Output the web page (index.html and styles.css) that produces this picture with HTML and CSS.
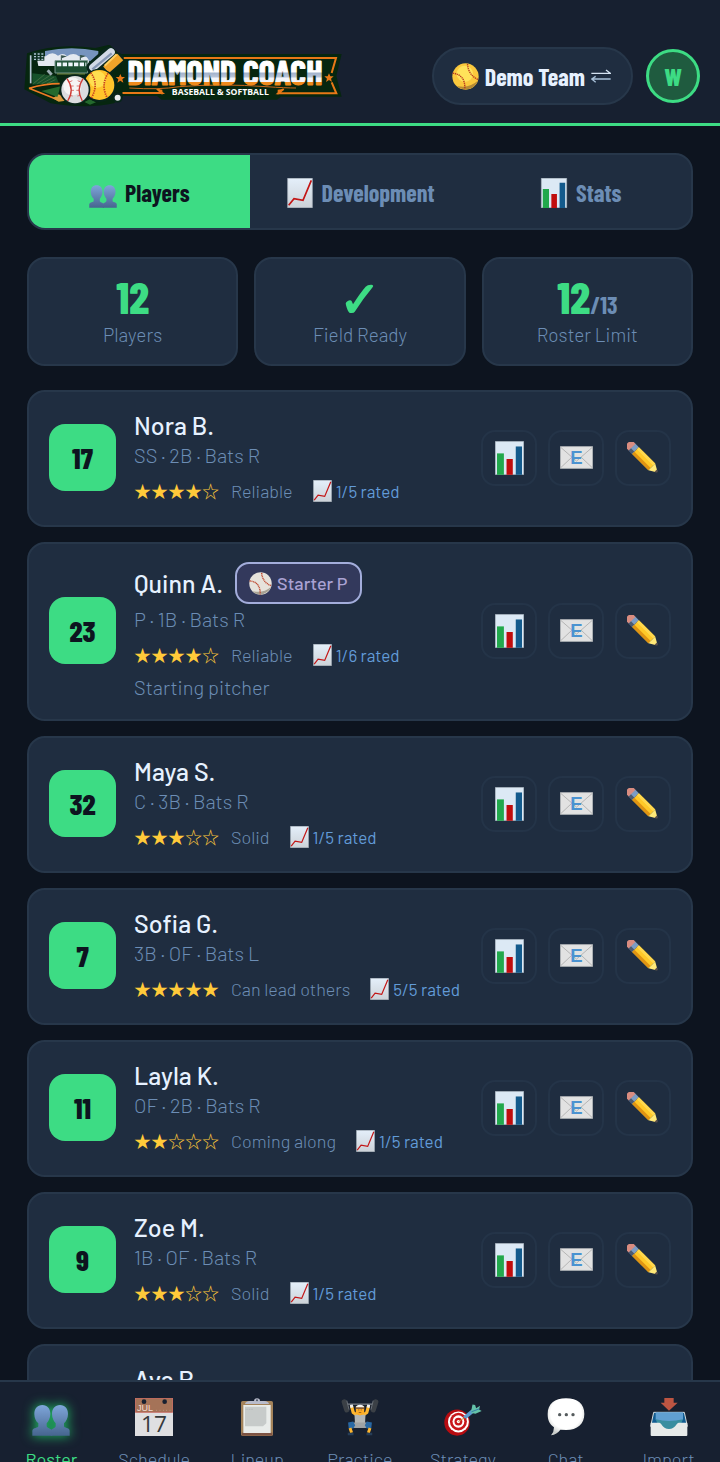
FILE: index.html
```html
<!DOCTYPE html>
<html lang="en">
<head>
    <meta charset="UTF-8">
    <meta name="viewport" content="width=device-width,initial-scale=1">
    <title>Diamond Coach - Roster</title>
    <link rel="stylesheet" href="styles.css">
</head>
<body>
<!-- shared icons -->
<svg class="sprite" aria-hidden="true">
    <defs>
        <linearGradient id="bust" x1="0" y1="0" x2="0" y2="1">
            <stop offset="0" stop-color="#7fa6da"/><stop offset="1" stop-color="#46658f"/>
        </linearGradient>
        <linearGradient id="paper" x1="0" y1="0" x2="0" y2="1">
            <stop offset="0" stop-color="#e4effa"/><stop offset="1" stop-color="#ccd2d8"/>
        </linearGradient>
        <linearGradient id="chrome" gradientUnits="userSpaceOnUse" x1="0" y1="93" x2="0" y2="168">
            <stop offset="0.44" stop-color="#ffffff"/><stop offset="0.48" stop-color="#a3b3cc"/>
            <stop offset="0.64" stop-color="#b9c5d8"/><stop offset="0.68" stop-color="#f4f6fa"/>
            <stop offset="0.82" stop-color="#f4f6fa"/><stop offset="0.86" stop-color="#ef8a1c"/>
        </linearGradient>
        <radialGradient id="bubble" cx="0.5" cy="0.4" r="0.6">
            <stop offset="0.7" stop-color="#ffffff"/><stop offset="1" stop-color="#c9ccc9"/>
        </radialGradient>
    </defs>
    <symbol id="users" viewBox="0 0 114 94" preserveAspectRatio="xMidYMax meet">
        <g fill="url(#bust)">
            <path d="M31 1c15 0 24 11 24 27 0 13-6 22-11 28v9c0 5 13 7 17 13v15H1V78c2-9 18-8 18-13v-9C12 50 7 41 7 28 7 12 16 1 31 1z"/>
            <path d="M84 1c15 0 24 11 24 27 0 13-6 22-12 28v9c0 5 16 4 17 13v15H56V78c4-6 15-8 15-13v-9C66 50 60 41 60 28 60 12 69 1 84 1z"/>
        </g>
    </symbol>
    <symbol id="trend" viewBox="0 0 76 90">
        <path fill="url(#paper)" stroke="#aab4be" stroke-width="2" d="M1 1h74v88H1z"/>
        <path fill="none" stroke="#c31616" stroke-width="5" d="M4 82l16-20 27 5L72 7"/>
    </symbol>
    <symbol id="bars" viewBox="0 0 88 102">
        <path fill="#dce9f5" stroke="#b3bec8" stroke-width="2" d="M1 1h86v100H1z"/>
        <path fill="#22a84c" d="M6 37h21v65H6z"/>
        <path fill="#c00d0d" d="M35 54h19v48H35z"/>
        <path fill="#135a8c" d="M63 16h19v86H63z"/>
    </symbol>
    <symbol id="mail" viewBox="0 0 100 68">
        <path fill="#e2e2e2" stroke="#b4b8bb" stroke-width="2" d="M1 1h98v66H1z"/>
        <path fill="none" stroke="#b4b4b4" stroke-width="3" d="M2 3l48 42L98 3M2 65l34-32M98 65L64 33"/>
        <text x="50" y="54" text-anchor="middle" class="mail-letter">E</text>
    </symbol>
    <symbol id="pencil" viewBox="0 0 100 100">
        <g transform="rotate(45 50 50) translate(0 -12) scale(1 1.24)">
            <path fill="#d98c80" d="M-8 38q-9 0-9 12t9 12H4V38z"/>
            <path fill="#7b9cc4" d="M2 38h15v24H2z"/>
            <path fill="#4c5a70" d="M2 54h15v8H2z"/>
            <path fill="#ffc928" d="M17 38h72v24H17z"/>
            <path fill="#ffd84e" d="M17 38h72v7H17z"/>
            <path fill="#e09413" d="M17 54h72v8H17z"/>
            <path fill="#ffe978" d="M89 38l22 10v4L89 62z"/>
            <path fill="#5b4b4a" d="M106 46l8 4-8 4z"/>
        </g>
    </symbol>
    <symbol id="baseball" viewBox="0 0 80 80">
        <circle cx="40" cy="40" r="39" fill="#e6e3dc"/>
        <path fill="#a7a294" d="M76 52A39 39 0 0 1 12 67q38 8 64-15z"/>
        <path fill="none" stroke="#bf4b33" stroke-width="5" stroke-dasharray="4 2" d="M2 31q38 3 37 47M44 3q2 32 33 45"/>
    </symbol>
    <symbol id="softball" viewBox="0 0 80 80">
        <circle cx="40" cy="40" r="39" fill="#fbc93d"/>
        <circle cx="38" cy="32" r="24" fill="#ffe35a"/>
        <path fill="#b58a35" d="M77 52A39 39 0 0 1 14 68q38 8 63-16z"/>
        <path fill="none" stroke="#b8371f" stroke-width="4" stroke-dasharray="4 2" d="M2 30q38 4 36 48M46 3q2 32 31 46"/>
    </symbol>
    <symbol id="swap" viewBox="0 0 60 40">
        <path fill="none" stroke="#d5e3f2" stroke-width="4" d="M1 12h56M45 2l13 10H45"/>
        <path fill="none" stroke="#a9c1d9" stroke-width="4" d="M59 29H3M14 39L2 29l12-8"/>
    </symbol>
    <symbol id="calendar" viewBox="0 0 114 114">
        <path fill="#dfdfe1" d="M0 0h114v114H0z"/>
        <path fill="#a57358" stroke="#c74f45" stroke-width="2" d="M1 1h112v42H1z"/>
        <circle cx="27" cy="11" r="7" fill="#172030"/><circle cx="89" cy="11" r="7" fill="#172030"/>
        <text x="6" y="40" class="cal-month">JUL</text>
        <path stroke="#d8b5a6" stroke-width="2" stroke-dasharray="2 8" d="M64 37h46"/>
        <text x="57" y="101" text-anchor="middle" class="cal-day">17</text>
    </symbol>
    <symbol id="clipboard" viewBox="0 0 98 114">
        <rect x="1" y="9" width="96" height="105" rx="5" fill="#a4835a"/>
        <path fill="#7d5343" d="M3 104h92v9H3z"/>
        <path fill="#e9ecea" d="M8 21h82v84H8z"/>
        <path fill="#c7cbca" d="M13 26h64v50l-10 9H13z"/>
        <path stroke="#a8afb2" stroke-width="2" stroke-dasharray="3 2" d="M15 34h22"/>
        <path fill="#b9bccc" d="M13 18q1-8 15-9h12q0-8 9-8t9 8h12q14 1 15 9z"/>
        <circle cx="49" cy="7" r="3" fill="#4d5665"/>
    </symbol>
    <symbol id="lifter" viewBox="0 0 118 114">
        <path stroke="#9a9ea3" stroke-width="3" d="M12 17L106 17"/>
        <path fill="none" stroke="#ffb62e" stroke-width="10" stroke-linejoin="round" d="M32 21l6 22 14 10M86 21l-6 22-14 10"/>
        <path stroke="#eceff2" stroke-width="9" d="M32 19l2 9M86 19l-2 9"/>
        <path stroke="#3b4046" stroke-width="16" stroke-linecap="round" d="M10 10l8 25M108 10l-8 25"/>
        <path stroke="#6b7178" stroke-width="3" d="M18 6l7 28M100 6l-7 28"/>
        <path fill="#b3b6b5" d="M42 50h34l-2 40H44z"/>
        <path fill="#ffad24" d="M46 24h26v20q-13 16-26 0z"/>
        <path fill="#8a5a2e" d="M46 32q0-12 13-12t13 12z"/>
        <path fill="#f3f5f6" d="M46 27q2-8 13-8t13 8z"/>
        <path stroke="#704321" stroke-width="2" d="M53 35h4M61 35h4M55 43h8"/>
        <path fill="#9fa3a5" d="M38 74h42v17H38z"/>
        <path fill="#2868a4" d="M22 74l16-3 6 12-6 10H24zM96 74l-16-3-6 12 6 10h14z"/>
        <path fill="none" stroke="#ffb62e" stroke-width="9" d="M28 91l5 15M90 91l-5 15"/>
        <path stroke="#263d57" stroke-width="8" d="M21 110h18M79 110h18"/>
    </symbol>
    <symbol id="target" viewBox="0 0 116 98" preserveAspectRatio="xMidYMax meet">
        <ellipse cx="40" cy="57" rx="39" ry="40" fill="#b70c11"/>
        <ellipse cx="44" cy="55" rx="32" ry="32" fill="#fff"/>
        <ellipse cx="44" cy="54" rx="26" ry="27" fill="#c8171b"/>
        <ellipse cx="44" cy="54" rx="18" ry="19" fill="#fff"/>
        <ellipse cx="44" cy="54" rx="12" ry="12" fill="#c8171b"/>
        <circle cx="44" cy="54" r="5" fill="#fff"/>
        <path stroke="#d09339" stroke-width="3" d="M44 54l24-15"/>
        <path fill="#5b9ccf" d="M58 39l26-22 11 6-27 22z"/>
        <path fill="#64c2a9" d="M83 22L87 2l8 1 3 10 12-7-3 11 8 5-19 8-12-2z"/>
        <path stroke="#347da7" stroke-width="3" d="M84 24l24-9"/>
    </symbol>
    <symbol id="bubbles" viewBox="0 0 112 114">
        <path fill="url(#bubble)" d="M56 1c35 0 55 17 55 47S90 96 57 96l-18-1q-10 14-28 17 9-10 9-24C6 78 1 66 1 48 1 18 22 1 56 1z"/>
        <g fill="#555b5d"><circle cx="37" cy="50" r="5"/><circle cx="57" cy="50" r="5"/><circle cx="77" cy="50" r="5"/></g>
    </symbol>
    <symbol id="inbox" viewBox="0 0 114 114">
        <path fill="#115c91" stroke="#d8dcdd" stroke-width="3" d="M11 43h92l9 42H2z"/>
        <path fill="#609fd2" d="M17 43h82v22q-42 12-82 0z"/>
        <path fill="#398ea0" d="M17 64q40 10 82 0L84 98H31z"/>
        <path fill="#e7eae9" d="M2 74h25c9 0 10 19 30 19s21-19 30-19h25v37q0 3-3 3H5q-3 0-3-3z"/>
        <path fill="#bd5542" d="M43 0h28v14h12L57 38 32 14h11z"/>
    </symbol>
</svg>

<header class="header">
    <a class="logo" href="#" aria-label="Diamond Coach">
        <svg class="logo-art" viewBox="69 45 954 186">
            <path fill="#06260f" d="M340 72h682l-16 66 16 62H840l-12 9H482l-14-11H340z"/>
            <path fill="none" stroke="#e87817" stroke-width="6" d="M350 84h655l-13 45M992 157l14 33H832l16-13M350 189h134l-14-12"/>
            <path fill="none" stroke="#c9661a" stroke-width="3" d="M385 174q90 6 150-4 130-10 260 0 60 4 90 4"/>
            <path fill="#e87817" d="M984 130l4 9h10l-8 7 3 10-9-6-9 6 3-10-8-7h10zM464 176l20 3v16zM850 176l-20 3v16z"/>
            <path fill="#06260f" d="M78 70q90-32 205-16l43-10 35 34 4 124-26 18q-80 18-190 0l-79-42z"/>
            <path fill="#e87817" d="M358 132l4 9h10l-8 7 3 10-9-6-9 6 3-10-8-7h10z"/>
            <path fill="#7794be" d="M132 63q80-17 160 0v30H132z"/>
            <path fill="#e4e9f0" d="M109 93q8-17 25-14 20-18 37-2 16-11 27 2 20-14 36 0 25-7 31 17v12H112z"/>
            <path stroke="#b6c7d5" stroke-width="5" d="M89 76v84"/>
            <path stroke="#33504a" stroke-width="3" d="M181 76v18M238 75v15"/>
            <path fill="#33504a" d="M182 76l16 3-16 6zM239 75l16 3-16 6z"/>
            <path fill="#0d3020" d="M94 66h36v26H94z"/>
            <path stroke="#afc4d2" stroke-width="4" stroke-dasharray="6 5" d="M99 72h30M99 80h30M99 88h30"/>
            <path fill="#1b4d31" stroke="#76958b" stroke-width="3" d="M162 92h98v37h-98z"/>
            <path stroke="#eef5fb" stroke-width="11" stroke-dasharray="13 4" d="M168 103h88"/>
            <path stroke="#a8b64e" stroke-width="2" d="M168 132h84"/>
            <path fill="#16512a" d="M94 130l71 8 8 20-79 6z"/>
            <path stroke="#53774c" stroke-width="2" d="M97 161l34-28M109 161l38-25M122 161l37-20M138 161l25-12"/>
            <path stroke="#9aabb0" stroke-width="9" d="M140 121l12 13"/>
            <path stroke="#ed7c25" stroke-width="5" d="M84 175q46-14 92-14M84 175l90 36"/>
            <path fill="#d99a3c" d="M155 205l18-12 32 18-32 4z"/>
            <path fill="#24692d" d="M121 183l58-14-10 32zM250 216l16-8 19 9-18 7z"/>
            <path stroke="#08251a" stroke-width="39" stroke-linecap="round" d="M276 112l47-42M317 117l32-30"/>
            <path stroke="#d2d9e6" stroke-width="23" stroke-linecap="round" d="M276 112l54-46"/>
            <path stroke="#8597b4" stroke-width="7" d="M274 118l58-48"/>
            <path stroke="#efa429" stroke-width="26" d="M315 119l43-38"/>
            <path stroke="#ffcf61" stroke-width="6" d="M311 107l36-34"/>
            <circle cx="295" cy="166" r="50" fill="#08251a"/><circle cx="295" cy="165" r="45" fill="#ffc42b"/>
            <circle cx="289" cy="148" r="25" fill="#ffdf50"/>
            <path fill="none" stroke="#c33821" stroke-width="5" stroke-dasharray="4 3" d="M269 128q26 35 2 76M321 130q-22 35-3 72"/>
            <circle cx="222" cy="179" r="46" fill="#08251a"/><circle cx="222" cy="179" r="41" fill="#dbdddf"/>
            <circle cx="214" cy="169" r="27" fill="#f5f5f4"/>
            <path fill="none" stroke="#ce3b35" stroke-width="4" d="M198 146q24 33 2 67M246 146q-22 33-2 67"/>
            <path stroke="#ce3b35" stroke-width="2" d="M205 156l9-4M209 168h9M210 181h9M206 196l9 2M239 156l-9-4M236 168h-9M235 181h-9M238 196l-9 2"/>
            <circle cx="350" cy="203" r="15" fill="#08251a"/><circle cx="350" cy="203" r="9" fill="#e9eeee"/>
            <text x="672" y="166" text-anchor="middle" class="logo-name">DIAMOND COACH</text>
            <text x="658" y="195" text-anchor="middle" class="logo-tag">BASEBALL &amp; SOFTBALL</text>
        </svg>
    </a>
    <div class="header-right">
        <button class="team" type="button">
            <svg class="team-ball"><use href="#softball"/></svg>
            Demo Team
            <svg class="team-swap"><use href="#swap"/></svg>
        </button>
        <button class="avatar" type="button">W</button>
    </div>
</header>

<main class="content">
    <div class="tabs">
        <button class="tab active" type="button"><svg class="tab-icon"><use href="#users"/></svg>Players</button>
        <button class="tab" type="button"><svg class="tab-icon"><use href="#trend"/></svg>Development</button>
        <button class="tab" type="button"><svg class="tab-icon"><use href="#bars"/></svg>Stats</button>
    </div>

    <section class="stats">
        <div class="stat"><div class="stat-value">12</div><div class="stat-label">Players</div></div>
        <div class="stat"><div class="stat-value check">✓</div><div class="stat-label">Field Ready</div></div>
        <div class="stat"><div class="stat-value">12<span class="stat-max">/13</span></div><div class="stat-label">Roster Limit</div></div>
    </section>

    <section class="players">
        <article class="player">
            <div class="number">17</div>
            <div class="info">
                <div class="name">Nora B.</div>
                <div class="meta">SS · 2B · Bats R</div>
                <div class="rating"><span class="stars">★★★★☆</span><span class="level">Reliable</span><span class="rated"><svg><use href="#trend"/></svg>1/5 rated</span></div>
            </div>
            <div class="actions">
                <button type="button" aria-label="Stats"><svg class="ico-bars"><use href="#bars"/></svg></button>
                <button type="button" aria-label="Email"><svg class="ico-mail"><use href="#mail"/></svg></button>
                <button type="button" aria-label="Edit"><svg class="ico-pencil"><use href="#pencil"/></svg></button>
            </div>
        </article>
        <article class="player">
            <div class="number">23</div>
            <div class="info">
                <div class="name">Quinn A. <span class="role"><svg><use href="#baseball"/></svg>Starter P</span></div>
                <div class="meta">P · 1B · Bats R</div>
                <div class="rating"><span class="stars">★★★★☆</span><span class="level">Reliable</span><span class="rated"><svg><use href="#trend"/></svg>1/6 rated</span></div>
                <div class="note">Starting pitcher</div>
            </div>
            <div class="actions">
                <button type="button" aria-label="Stats"><svg class="ico-bars"><use href="#bars"/></svg></button>
                <button type="button" aria-label="Email"><svg class="ico-mail"><use href="#mail"/></svg></button>
                <button type="button" aria-label="Edit"><svg class="ico-pencil"><use href="#pencil"/></svg></button>
            </div>
        </article>
        <article class="player">
            <div class="number">32</div>
            <div class="info">
                <div class="name">Maya S.</div>
                <div class="meta">C · 3B · Bats R</div>
                <div class="rating"><span class="stars">★★★☆☆</span><span class="level">Solid</span><span class="rated"><svg><use href="#trend"/></svg>1/5 rated</span></div>
            </div>
            <div class="actions">
                <button type="button" aria-label="Stats"><svg class="ico-bars"><use href="#bars"/></svg></button>
                <button type="button" aria-label="Email"><svg class="ico-mail"><use href="#mail"/></svg></button>
                <button type="button" aria-label="Edit"><svg class="ico-pencil"><use href="#pencil"/></svg></button>
            </div>
        </article>
        <article class="player">
            <div class="number">7</div>
            <div class="info">
                <div class="name">Sofia G.</div>
                <div class="meta">3B · OF · Bats L</div>
                <div class="rating"><span class="stars">★★★★★</span><span class="level">Can lead others</span><span class="rated"><svg><use href="#trend"/></svg>5/5 rated</span></div>
            </div>
            <div class="actions">
                <button type="button" aria-label="Stats"><svg class="ico-bars"><use href="#bars"/></svg></button>
                <button type="button" aria-label="Email"><svg class="ico-mail"><use href="#mail"/></svg></button>
                <button type="button" aria-label="Edit"><svg class="ico-pencil"><use href="#pencil"/></svg></button>
            </div>
        </article>
        <article class="player">
            <div class="number">11</div>
            <div class="info">
                <div class="name">Layla K.</div>
                <div class="meta">OF · 2B · Bats R</div>
                <div class="rating"><span class="stars">★★☆☆☆</span><span class="level">Coming along</span><span class="rated"><svg><use href="#trend"/></svg>1/5 rated</span></div>
            </div>
            <div class="actions">
                <button type="button" aria-label="Stats"><svg class="ico-bars"><use href="#bars"/></svg></button>
                <button type="button" aria-label="Email"><svg class="ico-mail"><use href="#mail"/></svg></button>
                <button type="button" aria-label="Edit"><svg class="ico-pencil"><use href="#pencil"/></svg></button>
            </div>
        </article>
        <article class="player">
            <div class="number">9</div>
            <div class="info">
                <div class="name">Zoe M.</div>
                <div class="meta">1B · OF · Bats R</div>
                <div class="rating"><span class="stars">★★★☆☆</span><span class="level">Solid</span><span class="rated"><svg><use href="#trend"/></svg>1/5 rated</span></div>
            </div>
            <div class="actions">
                <button type="button" aria-label="Stats"><svg class="ico-bars"><use href="#bars"/></svg></button>
                <button type="button" aria-label="Email"><svg class="ico-mail"><use href="#mail"/></svg></button>
                <button type="button" aria-label="Edit"><svg class="ico-pencil"><use href="#pencil"/></svg></button>
            </div>
        </article>
        <article class="player">
            <div class="info info-only">
                <div class="name">Ava P.</div>
            </div>
        </article>
    </section>
</main>

<nav class="navbar">
    <a class="active" href="#roster"><svg><use href="#users"/></svg>Roster</a>
    <a href="#schedule"><svg><use href="#calendar"/></svg>Schedule</a>
    <a href="#lineup"><svg><use href="#clipboard"/></svg>Lineup</a>
    <a href="#practice"><svg><use href="#lifter"/></svg>Practice</a>
    <a href="#strategy"><svg><use href="#target"/></svg>Strategy</a>
    <a href="#chat"><svg><use href="#bubbles"/></svg>Chat</a>
    <a href="#import"><svg><use href="#inbox"/></svg>Import</a>
</nav>
</body>
</html>
```

FILE: styles.css
```css
:root {
    --bg: #0d141f;
    --bar: #172030;
    --card: #1f2d40;
    --line: #27374a;
    --green: #3ddc84;
    --text: #e6f1ff;
    --muted: #6c8db5;
    --blue: #629bd8;
    --cond: "Barlow Condensed", "Liberation Sans Narrow", Roboto, sans-serif;
}

* { box-sizing: border-box; }
body {
    margin: 0;
    height: 100vh;
    display: flex;
    flex-direction: column;
    overflow: hidden;
    background: var(--bg);
    color: var(--text);
    font-family: Barlow, Roboto, sans-serif;
}
button { font: inherit; color: inherit; padding: 0; cursor: pointer; }
svg { display: block; flex: none; }
.sprite { position: absolute; width: 0; height: 0; }

/* header */
.header {
    flex: none;
    display: flex;
    align-items: center;
    justify-content: space-between;
    padding: 45px 20px 16px 24px;
    background: var(--bar);
    border-bottom: 3px solid var(--green);
}
.logo-art { width: 318px; height: 62px; }
.logo-name { font: bold 102px var(--cond); fill: url(#chrome); stroke: url(#chrome); stroke-width: 3; }
.logo-tag { font: bold 26px "Open Sans", sans-serif; fill: #fff; }
.header-right { display: flex; align-items: center; gap: 13px; }
.team {
    display: flex;
    align-items: center;
    gap: 6px;
    height: 58px;
    padding: 0 20px 0 18px;
    border: 2px solid var(--line);
    border-radius: 29px;
    background: var(--card);
    font: bold 24px var(--cond);
}
.team-ball { width: 27px; height: 27px; }
.team-swap { width: 20px; height: 14px; }
.avatar {
    width: 54px;
    height: 54px;
    border: 3px solid var(--green);
    border-radius: 50%;
    background: #1f5b3f;
    color: var(--green);
    font: 800 25px var(--cond);
}

/* content */
.content { flex: 1; min-height: 0; overflow: hidden; padding: 27px 27px 0; }
.tabs {
    display: flex;
    height: 77px;
    border: 2px solid var(--line);
    border-radius: 18px;
    background: var(--card);
    overflow: hidden;
}
.tab {
    flex: 1;
    display: flex;
    align-items: center;
    justify-content: center;
    gap: 8px;
    padding-top: 2px;
    border: 0;
    background: none;
    color: var(--muted);
    font: bold 24px var(--cond);
}
.tab.active { background: var(--green); color: var(--bg); }
.tab-icon { width: 28px; height: 30px; }

.stats { display: grid; grid-template-columns: repeat(3, 1fr); gap: 16px; margin: 27px 0 24px; }
.stat {
    padding: 16px 0 17px;
    border: 2px solid var(--line);
    border-radius: 18px;
    background: var(--card);
    text-align: center;
}
.stat-value { height: 44px; font: 800 44px/44px var(--cond); color: var(--green); }
.stat-value.check { font-size: 50px; }
.stat-max { font-size: 24px; line-height: 24px; font-weight: 700; color: var(--muted); }
.stat-label { margin-top: 4px; font-size: 19px; line-height: 24px; font-weight: 300; color: var(--muted); }

/* player cards */
.players { display: flex; flex-direction: column; gap: 15px; }
.player {
    display: flex;
    align-items: center;
    padding: 18px 20px 20px;
    border: 2px solid var(--line);
    border-radius: 18px;
    background: var(--card);
}
.number {
    display: flex;
    align-items: center;
    justify-content: center;
    width: 67px;
    height: 67px;
    margin-right: 18px;
    border-radius: 16px;
    background: var(--green);
    color: var(--bg);
    font: 800 29px var(--cond);
}
.info { flex: 1; min-width: 0; white-space: nowrap; }
.info-only { padding-left: 85px; min-height: 95px; }
.name { display: flex; align-items: center; gap: 12px; font-size: 25px; line-height: 30px; font-weight: 500; }
.role {
    display: flex;
    align-items: center;
    gap: 5px;
    height: 42px;
    padding: 0 12px;
    border: 2px solid #a3addb;
    border-radius: 14px;
    background: #33395c;
    color: #aaa2d3;
    font-size: 18px;
}
.role svg { width: 23px; height: 23px; }
.meta { font-size: 20px; line-height: 30px; font-weight: 300; color: var(--muted); }
.rating { display: flex; align-items: center; margin-top: 7px; line-height: 28px; }
.stars { width: 84px; font-family: "Noto Sans CJK JP", sans-serif; font-size: 17px; color: #ffca3a; }
.level { margin: 0 20px 0 13px; font-size: 18px; font-weight: 300; color: var(--muted); }
.rated { display: flex; align-items: center; gap: 4px; font-size: 17px; color: var(--blue); }
.rated svg { width: 19px; height: 22px; }
.note { margin-top: 6px; font-size: 20px; line-height: 24px; font-weight: 300; color: var(--muted); }
.actions { display: flex; gap: 11px; }
.actions button {
    display: flex;
    align-items: center;
    justify-content: center;
    width: 56px;
    height: 56px;
    border: 2px solid #243448;
    border-radius: 14px;
    background: none;
}
.ico-bars { width: 29px; height: 34px; }
.ico-mail { width: 33px; height: 23px; }
.ico-pencil { width: 32px; height: 32px; }
.mail-letter { font: bold 56px "Liberation Sans", sans-serif; fill: #4b93d1; }

/* bottom navigation, labels run under the screen edge */
.navbar {
    flex: none;
    display: grid;
    grid-template-columns: repeat(7, 1fr);
    height: 82px;
    padding-top: 16px;
    overflow: hidden;
    background: var(--bar);
    border-top: 2px solid var(--line);
}
.navbar a {
    display: flex;
    flex-direction: column;
    align-items: center;
    gap: 11px;
    font-size: 18px;
    line-height: 24px;
    font-weight: 300;
    color: var(--muted);
    text-decoration: none;
}
.navbar svg { width: 38px; height: 38px; }
.navbar .active { color: var(--green); font-weight: 400; }
.navbar .active svg { filter: drop-shadow(0 0 6px #22c768); }
.cal-month { font: 27px "Liberation Sans", sans-serif; fill: #f2dcd4; }
.cal-day { font: 68px "Open Sans", sans-serif; fill: #36393c; }
```
